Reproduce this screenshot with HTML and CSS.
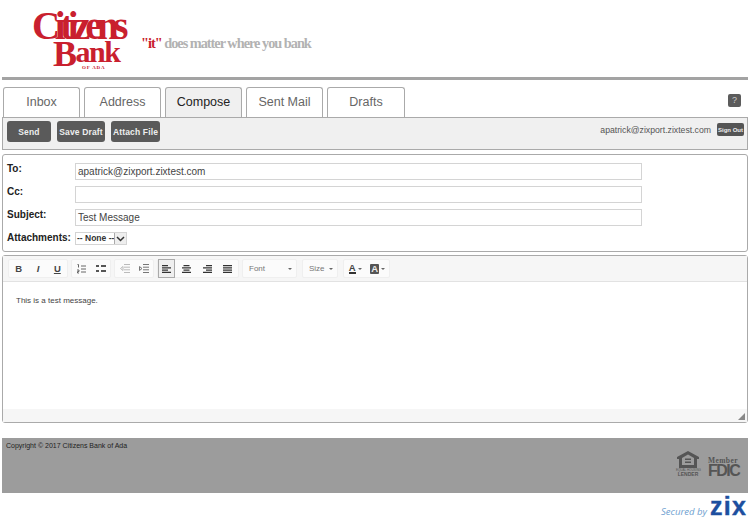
FILE: index.html
```html
<!DOCTYPE html>
<html lang="en">
<head>
<meta charset="utf-8">
<title>Compose</title>
<link rel="stylesheet" href="styles.css">
</head>
<body>
<header class="brand">
  <div class="logo">
    <div class="logo-top">Citizens</div>
    <div class="logo-mid"><span class="logo-b">B</span>ank</div>
    <div class="logo-sub">OF ADA</div>
  </div>
  <div class="tagline"><span class="tag-it">"it"</span> does matter where you bank</div>
</header>
<div class="rule"></div>
<nav class="tabs">
  <a class="tab">Inbox</a>
  <a class="tab">Address</a>
  <a class="tab tab-active">Compose</a>
  <a class="tab">Sent Mail</a>
  <a class="tab">Drafts</a>
  <span class="help">?</span>
</nav>
<div class="actions">
  <button class="btn btn-send">Send</button>
  <button class="btn btn-save">Save Draft</button>
  <button class="btn btn-attach">Attach File</button>
  <span class="user">apatrick@zixport.zixtest.com</span>
  <button class="signout">Sign Out</button>
</div>
<form class="fields">
  <label class="lbl">To:</label><div class="input">apatrick@zixport.zixtest.com</div>
  <label class="lbl">Cc:</label><div class="input"></div>
  <label class="lbl">Subject:</label><div class="input">Test Message</div>
  <label class="lbl">Attachments:</label>
  <div class="select"><span class="select-text">-- None --</span><span class="select-arrow"><svg width="9" height="6" viewBox="0 0 9 6"><path d="M1 1l3.500 3.500L8 1" fill="none" stroke="#333" stroke-width="1.500"/></svg></span></div>
</form>
<section class="editor">
  <div class="etools">
    <div class="group g-fmt">
      <span class="ti b">B</span><span class="ti i">I</span><span class="ti u">U</span>
    </div>
    <div class="group g-list">
      <span class="ti"><svg width="9" height="10" viewBox="0 0 9 10"><path d="M0.500 0.500h1v3M0 6h2v1.500H0.500V9H2M4 2h5M4 5h5M4 8h5" fill="none" stroke="#666" stroke-width="1"/></svg></span>
      <span class="ti"><svg width="10" height="7" viewBox="0 0 10 7"><path d="M0 1h3M5 1h5M0 6h3M5 6h5" fill="none" stroke="#555" stroke-width="2"/></svg></span>
    </div>
    <div class="group g-indent">
      <span class="ti"><svg width="10" height="9" viewBox="0 0 10 9"><path d="M4 .5h6M4 3.200h6M4 5.800h6M4 8.500h6M3 2.500L0.500 4.500L3 6.500z" fill="none" stroke="#bbb" stroke-width="1"/></svg></span>
      <span class="ti"><svg width="10" height="9" viewBox="0 0 10 9"><path d="M4 .5h6M4 3.200h6M4 5.800h6M4 8.500h6M0.500 2.500L3 4.500L0.500 6.500z" fill="none" stroke="#777" stroke-width="1"/></svg></span>
    </div>
    <div class="group g-align">
      <span class="ti active"><svg width="9" height="8" viewBox="0 0 9 8"><path d="M0 .7h6M0 2.900h9M0 5.100h6M0 7.300h9" fill="none" stroke="#333" stroke-width="1.200"/></svg></span>
      <span class="ti"><svg width="9" height="8" viewBox="0 0 9 8"><path d="M1.500 .7h6M0 2.900h9M1.500 5.100h6M0 7.300h9" fill="none" stroke="#333" stroke-width="1.200"/></svg></span>
      <span class="ti"><svg width="9" height="8" viewBox="0 0 9 8"><path d="M3 .7h6M0 2.900h9M3 5.100h6M0 7.300h9" fill="none" stroke="#333" stroke-width="1.200"/></svg></span>
      <span class="ti"><svg width="9" height="8" viewBox="0 0 9 8"><path d="M0 .7h9M0 2.900h9M0 5.100h9M0 7.300h9" fill="none" stroke="#333" stroke-width="1.200"/></svg></span>
    </div>
    <div class="group combo g-font"><span>Font</span><span class="caret"></span></div>
    <div class="group combo g-size"><span>Size</span><span class="caret"></span></div>
    <div class="group g-color">
      <span class="ti color"><span class="a-fg">A</span><span class="caret"></span></span>
      <span class="ti color"><span class="a-bg">A</span><span class="caret"></span></span>
    </div>
  </div>
  <div class="ebody">This is a test message.</div>
  <div class="estatus"><svg width="7" height="7" viewBox="0 0 7 7"><path d="M7 0v7H0z" fill="#888"/></svg></div>
</section>
<footer class="foot">
  <div class="copy">Copyright © 2017 Citizens Bank of Ada</div>
  <div class="badges">
    <div class="ehl">
      <svg width="24" height="19" viewBox="0 0 24 19"><path d="M12 1L1 7v2h2v9h18V9h2V7z M6 8L12 4.500L18 8v7H6z" fill="#555" fill-rule="evenodd"/><path d="M9 8.500h6V10H9zM9 11.500h6V13H9z" fill="#555"/></svg>
      <div class="ehl-small">EQUAL HOUSING</div>
      <div class="ehl-big">LENDER</div>
    </div>
    <div class="fdic">
      <div class="fdic-m">Member</div>
      <div class="fdic-n">FDIC</div>
    </div>
  </div>
</footer>
<div class="secured"><span class="sec-by">Secured by</span><span class="zix">zix</span></div>
</body>
</html>
```
FILE: styles.css
```css
* { box-sizing: border-box; }
html, body { margin: 0; padding: 0; }
body { width: 750px; height: 519px; overflow: hidden; background: #fff; font-family: "Liberation Sans", Arial, sans-serif; color: #333; }

.brand { height: 77px; display: flex; padding: 9px 0 0 32px; }
.logo { width: 97px; color: #c9202e; font-family: "Liberation Serif", serif; font-weight: bold; }
.logo-top { font-size: 39px; line-height: 34px; letter-spacing: -5.4px; white-space: nowrap; }
.logo-mid { font-size: 30px; line-height: 18px; letter-spacing: -1.5px; padding-left: 21px; white-space: nowrap; }
.logo-b { font-size: 36px; line-height: 18px; vertical-align: -4px; }
.logo-sub { font-size: 5px; line-height: 5px; letter-spacing: .8px; padding-left: 50px; margin-top: 2px; white-space: nowrap; }
.tagline { margin: 25px 0 0 12px; font-family: "Liberation Serif", serif; font-weight: bold; font-size: 14.3px; line-height: 18px; letter-spacing: -1px; color: #b2b2b2; white-space: nowrap; }
.tag-it { color: #c9202e; }

.rule { height: 3px; margin: 0 2px; background: #a3a3a3; }

.tabs { display: flex; gap: 4px; height: 37px; padding: 7px 9px 0 3px; }
.tab { width: 77px; height: 30px; border: 1px solid #aaa; border-bottom: 0; border-radius: 3px 3px 0 0; background: #fff; color: #666; font-size: 12.5px; line-height: 28px; text-align: center; }
.tab:last-of-type { width: 78px; }
.tab-active { background: #f0f0f0; color: #222; }
.help { width: 13px; height: 13px; margin: 7px 0 0 auto; border-radius: 2px; background: #5c5c5c; color: #ccc; font-size: 9px; line-height: 13px; text-align: center; }

.actions { height: 33px; margin: 0 2px; padding: 3px 3px 0 4px; display: flex; align-items: flex-start; background: #f0f0f0; border: 1px solid #aaa; }
.btn { height: 21px; padding: 0; border: 0; border-radius: 3px; background: #5a5a5a; color: #eee; font-family: "Liberation Sans", Arial, sans-serif; font-size: 8.5px; font-weight: bold; letter-spacing: .15px; white-space: nowrap; }
.btn-send { width: 44px; margin-right: 6px; }
.btn-save { width: 48px; margin-right: 6px; }
.btn-attach { width: 49px; }
.user { margin: 3px 6px 0 auto; font-size: 8.7px; line-height: 12px; color: #555; }
.signout { width: 27px; height: 13px; margin-top: 2px; padding: 0; border: 0; border-radius: 2px; background: #555; color: #eee; font-family: "Liberation Sans", Arial, sans-serif; font-size: 6px; font-weight: bold; white-space: nowrap; }

.fields { height: 98px; margin: 4px 2px 0; padding: 8px 0 0 4px; display: grid; grid-template-columns: 68px 567px; grid-template-rows: 17px 17px 17px 13px; row-gap: 6px; border: 1px solid #aaa; border-radius: 3px; }
.lbl { font-size: 10px; font-weight: bold; color: #222; line-height: 11px; white-space: nowrap; }
.input { height: 17px; padding: 0 2px; border: 1px solid #d4d4d4; background: #fff; color: #444; font-size: 10px; line-height: 15px; }
.select { width: 52px; height: 13px; display: flex; border: 1px solid #d4d4d4; background: #fff; }
.select-text { flex: 1; font-size: 8.5px; font-weight: bold; color: #333; line-height: 11px; padding-left: 1px; white-space: nowrap; }
.select-arrow { width: 13px; height: 11px; display: flex; align-items: center; justify-content: center; border-left: 1px solid #aaa; background: #eee; }

.editor { height: 168px; margin: 3px 2px 0; display: flex; flex-direction: column; border: 1px solid #aaa; border-radius: 3px; }
.etools { height: 26px; flex: none; padding: 3px 0 0 5px; display: flex; gap: 3px; background: #f6f6f6; border-bottom: 1px solid #e2e2e2; }
.group { height: 19px; display: flex; background: #fbfbfb; border: 1px solid #efefef; border-radius: 2px; }
.g-fmt { width: 60px; }
.g-list { width: 40px; }
.g-indent { width: 40px; }
.g-align { width: 82px; }
.g-font { width: 55px; }
.g-size { width: 36px; margin-left: 2px; }
.g-color { width: 47px; margin-left: 2px; }
.ti { flex: 1; display: flex; align-items: center; justify-content: center; color: #444; font-size: 9.500px; font-family: "Liberation Sans", Arial, sans-serif; }
.b { font-weight: bold; }
.i { font-style: italic; font-weight: bold; }
.u { text-decoration: underline; font-weight: bold; }
.active { flex: none; width: 17px; background: #efefef; border: 1px solid #aaa; margin: -1px 1px -1px 0; }
.combo { padding: 0 4px 0 6px; align-items: center; justify-content: space-between; font-size: 8px; color: #777; }
.caret { width: 0; height: 0; margin-left: 2px; border-style: solid; border-width: 2px 2px 0; border-color: #666 transparent transparent; }
.color { font-weight: bold; font-size: 9.500px; }
.a-fg { border-bottom: 2px solid #333; line-height: 9px; }
.a-bg { background: #555; color: #eee; line-height: 10px; padding: 0 1px; border-radius: 1px; }
.ebody { flex: 1; padding: 13px 13px; background: #fff; font-size: 8px; color: #444; line-height: 12px; }
.estatus { height: 13px; flex: none; display: flex; justify-content: flex-end; padding: 4px 2px 0 0; background: #f6f6f6; }

.foot { height: 55px; margin: 15px 2px 0; padding: 3px 4px; display: flex; justify-content: space-between; background: #9c9c9c; }
.copy { font-size: 7px; line-height: 9px; color: #222; }
.badges { display: flex; gap: 8px; padding: 9px 5px 0 0; }
.ehl { width: 24px; text-align: center; color: #555; }
.ehl svg { display: block; }
.ehl-small { font-size: 3px; line-height: 3px; white-space: nowrap; }
.ehl-big { font-size: 5px; line-height: 5px; font-weight: bold; }
.fdic { width: 31px; color: #555; margin-top: 7px; }
.fdic-m { font-family: "Liberation Serif", serif; font-weight: bold; font-size: 7.5px; line-height: 7px; letter-spacing: .4px; }
.fdic-n { font-size: 16px; line-height: 13px; font-weight: bold; letter-spacing: -1.5px; }

.secured { height: 26px; padding-right: 3px; display: flex; justify-content: flex-end; align-items: flex-end; }
.sec-by { font-family: "Open Sans", sans-serif; font-style: italic; font-size: 9.600px; line-height: 14px; color: #6f9fd0; margin: 0 3px 0 0; }
.zix { font-size: 25px; line-height: 25px; font-weight: bold; color: #1d4f9f; letter-spacing: 1.2px; -webkit-text-stroke: .4px #1d4f9f; }
```
